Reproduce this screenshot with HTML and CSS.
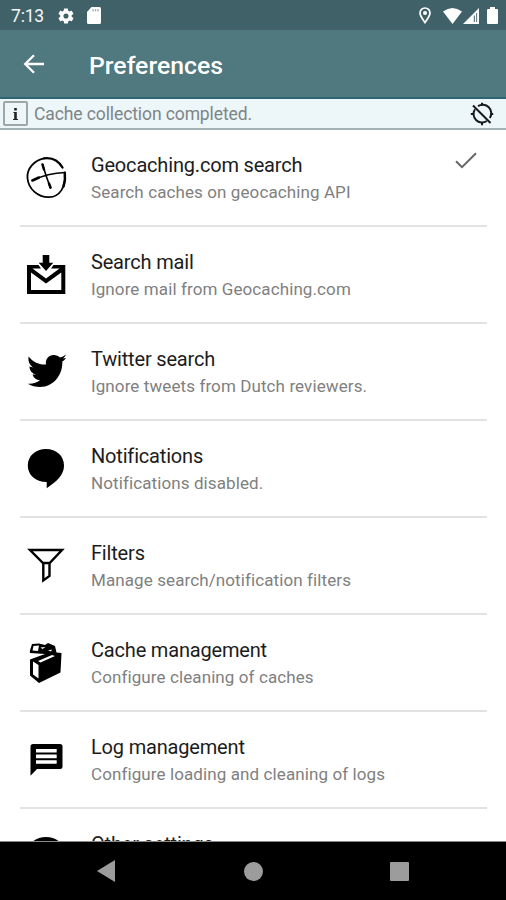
FILE: index.html
```html
<!DOCTYPE html>
<html lang="en">
<head>
<meta charset="utf-8">
<title>Preferences</title>
<link rel="stylesheet" href="styles.css">
</head>
<body>
<div class="screen">
  <header class="status">
    <span class="clock">7:13</span>
    <svg class="gear" width="16" height="16" viewBox="2 2 20 20"><path fill="#fff" d="M19.1 12.9a7 7 0 0 0 0-1.8l2-1.6c.2-.1.3-.4.1-.6l-1.9-3.3c-.1-.2-.4-.3-.6-.2l-2.4 1a7 7 0 0 0-1.6-1l-.4-2.5a.5.5 0 0 0-.5-.4h-3.800a.5.5 0 0 0-.5.4l-.4 2.500a7 7 0 0 0-1.600 1l-2.400-1c-.2-.1-.5 0-.6.2L2.700 8.900c-.1.2-.1.5.1.6l2 1.600a7 7 0 0 0 0 1.800l-2 1.600c-.2.1-.3.4-.1.6l1.900 3.300c.1.2.4.3.6.2l2.400-1a7 7 0 0 0 1.600 1l.4 2.500c0 .2.200.4.500.4h3.800c.2 0 .5-.2.500-.4l.4-2.500a7 7 0 0 0 1.600-1l2.400 1c.2.1.500 0 .6-.2l1.900-3.300c.1-.2.100-.5-.1-.6zM12 15.200a3.200 3.200 0 1 1 0-6.400 3.200 3.200 0 0 1 0 6.400z"/></svg>
    <svg class="card" width="14" height="17" viewBox="0 0 14 17"><path fill="#fff" d="M4.500 0H12.500Q14 0 14 1.500V15.500Q14 17 12.500 17H1.500Q0 17 0 15.500V5z"/><path stroke="#9fb3b6" stroke-width="1.300" d="M6 2v2.500M8.500 2v2.500M11 2v2.500"/></svg>
    <span class="spacer"></span>
    <svg class="pin" width="12" height="17" viewBox="0 0 12 17"><path fill="none" stroke="#fff" stroke-width="1.700" d="M6 15.500C4 12.500 1 9 1 6a5 5 0 0 1 10 0c0 3-3 6.500-5 9.500z"/><circle cx="6" cy="6" r="2" fill="#fff"/></svg>
    <svg class="wifi" width="19" height="16" viewBox="0 0 19 16"><path fill="#fff" d="M0 3.500Q9.500-3.500 19 3.500L9.500 16z"/></svg>
    <svg class="signal" width="16" height="16" viewBox="0 0 16 16"><path fill="#fff" d="M16 0V16H0z"/><path fill="#416168" d="M10.800 7.500h1v6.500h-1zM13.200 5h.9v9h-.9z"/></svg>
    <svg class="battery" width="11" height="17" viewBox="0 0 11 17"><path fill="#fff" d="M3 0h5v2h2q1 0 1 1v13q0 1-1 1H1q-1 0-1-1V3q0-1 1-1h2z"/></svg>
  </header>
  <div class="toolbar">
    <svg class="back" width="22" height="20" viewBox="0 0 22 20"><path fill="none" stroke="#fff" stroke-width="2.300" d="M21 10H2.500M11 1.200L2.200 10l8.800 8.800"/></svg>
    <h1>Preferences</h1>
  </div>
  <div class="notice">
    <span class="info"><svg width="5" height="12" viewBox="0 0 5 12"><path fill="#222" d="M1.200 0h2.600v2.400H1.200zM.4 4h3.400v7H5v1H0v-1h1.200V5H.4z"/></svg></span>
    <span class="notice-text">Cache collection completed.</span>
    <svg class="gps" width="24" height="24" viewBox="0 0 24 24"><g fill="none" stroke="#161b1c" stroke-width="2"><path d="M8 4.200A8.500 8.500 0 0 1 19.800 16M16.800 19A8.500 8.500 0 0 1 5 7.200"/><path d="M3 3.500L20.500 21M12 .8v3M12 20.200v3M.8 12h3M20.200 12h3"/></g></svg>
  </div>
  <main class="list">
    <section class="row">
      <svg class="icon" viewBox="0 0 50 50"><g fill="none" stroke="#000" stroke-linecap="round"><path stroke-width="1.800" d="M23 6.300C14 8 5.500 16 6.500 26.500C7.500 37 17 45.500 28 45.200C39 44.800 45 35 44 20.500"/><path stroke-width="2.300" d="M23 6.300Q35 4.500 41.500 15.500"/><path stroke-width="1.600" d="M11 28.500Q27 21 44 20.500M21.500 12.500Q25 24 29.500 36"/><path stroke-width="2.500" d="M11.500 28.500L18 25.500M21.500 12.500l1.500 5M28 31.500l1.500 4M43.800 21q.8 7-1.200 13"/></g></svg>
      <div class="copy"><h2>Geocaching.com search</h2><p>Search caches on geocaching API</p></div>
      <svg class="check" width="22" height="17" viewBox="0 0 22 17"><path fill="none" stroke="#666" stroke-width="2" d="M1 9.200l6 6L21 1.200"/></svg>
    </section>
    <section class="row">
      <svg class="icon" viewBox="0 0 50 50"><path d="M6 16H17.500L20 19.500H11.500L25 29.500L38.500 19.500H30L32.500 16H44.300V45H6zM10 23.500V41H40.300V23.500L25 34.500z" fill-rule="evenodd"/><path d="M21.700 6h6.600v7.700h4L25 22l-7.300-8.300h4z"/></svg>
      <div class="copy"><h2>Search mail</h2><p>Ignore mail from Geocaching.com</p></div>
    </section>
    <section class="row">
      <svg class="icon" viewBox="0 0 50 50"><path d="M7.600 10.500C12 16 18 19 25 18.500C24 13 28 9 32.500 9C35.500 9 37.500 10 39 11.500C41 11.200 43 10 45 8.500C44.500 10 43.500 11.200 42 12.500L45 12C44 13.500 43 14.500 41.300 15.500C42 28 33 41 19 41C14.500 41 10.500 40 7 37.700C11.500 38 15.500 37 19 34.300C15 34 12.500 31.500 11.500 28.500H15C11 27.500 8.500 24.500 8.500 20.500L12 21.500C8 18.500 7 14.500 7.600 10.500z"/></svg>
      <div class="copy"><h2>Twitter search</h2><p>Ignore tweets from Dutch reviewers.</p></div>
    </section>
    <section class="row">
      <svg class="icon" viewBox="0 0 50 50"><path d="M25 6C35.500 6 43 13 43 22.500C43 32 36 38 25.700 45.300V39C14.500 39 6.800 32 6.800 22.500C6.800 13 14.500 6 25 6z"/></svg>
      <div class="copy"><h2>Notifications</h2><p>Notifications disabled.</p></div>
    </section>
    <section class="row">
      <svg class="icon" viewBox="0 0 50 50"><path fill="none" stroke="#000" stroke-width="2.400" d="M9 10H41L28.700 23H22zM22.300 23V40.500L28.500 36V23"/></svg>
      <div class="copy"><h2>Filters</h2><p>Manage search/notification filters</p></div>
    </section>
    <section class="row">
      <svg class="icon" viewBox="0 0 50 50"><path d="M8.800 14L11 7L18 6.500L24 8L27 6L34 9L35.500 15.500L40.500 16L39.500 35.500L18 46L9 38.500V22.500L24 17L9 16z"/><path fill="#fff" d="M12.500 9l5.500-.5L17 14l-5.500-.5zM12 24.500l5.500 3.500v13.500L12 37.500zM17 24L31 18l3 1L19.500 25.500zM27 13.500l4-1-1 2zM19.500 10.500l5-.5-3 2z"/></svg>
      <div class="copy"><h2>Cache management</h2><p>Configure cleaning of caches</p></div>
    </section>
    <section class="row">
      <svg class="icon" viewBox="0 0 50 50"><path d="M12 10H39Q41.500 10 41.500 12.500V32.500Q41.500 35 39 35H16L9.500 41.700V12.500Q9.500 10 12 10z"/><path fill="#fff" d="M15 15h20.700v3.500H15zM15 20.500h20.700v3.800H15zM15 26.300h20.700v3.500H15z"/></svg>
      <div class="copy"><h2>Log management</h2><p>Configure loading and cleaning of logs</p></div>
    </section>
    <section class="row">
      <svg class="icon" viewBox="0 0 50 50"><ellipse cx="25" cy="20" rx="18" ry="14"/></svg>
      <div class="copy"><h2>Other settings</h2></div>
    </section>
  </main>
  <nav class="navbar">
    <svg width="18" height="22" viewBox="0 0 18 22"><path fill="#9c9c9c" d="M18 0V22L0 11z"/></svg>
    <span class="home"></span>
    <span class="recent"></span>
  </nav>
</div>
</body>
</html>
```

FILE: styles.css
```css
* { box-sizing: border-box; }
body { margin: 0; background: #fff; font-family: Roboto, "Liberation Sans", sans-serif; }
h1, h2, p { margin: 0; white-space: nowrap; }
svg { display: block; flex: none; }
.screen { width: 506px; height: 900px; display: flex; flex-direction: column; overflow: hidden; }
.status { height: 30px; flex: none; background: #416168; display: flex; align-items: center; padding: 1px 8px 0 11px; color: #f4f8f8; }
.clock { width: 47px; font-size: 17.500px; line-height: 28px; letter-spacing: -.2px; }
.card { margin-left: 13px; }
.spacer { flex: 1; }
.wifi { margin-left: 12px; }
.signal { margin-left: 1px; }
.battery { margin-left: 8px; }
.toolbar { height: 69px; flex: none; background: #4f787f; border-bottom: 2px solid #2f6474; display: flex; align-items: center; padding: 4px 0 0 23px; }
.back { margin-top: -3px; }
h1 { margin-left: 44px; color: #fff; font-size: 24.800px; font-weight: 500; line-height: 32px; }
.notice { height: 31px; flex: none; background: #edf6f9; border-bottom: 2px solid #a5b2b3; display: flex; align-items: center; padding: 0 12px 0 3px; }
.info { width: 25px; height: 25px; border: 2px solid #a0a6a8; border-radius: 2px; display: grid; place-items: center; }
.notice-text { flex: 1; margin-left: 6px; font-size: 17.500px; letter-spacing: -.1px; color: #7d8586; padding-top: 1px; }
.list { flex: 1; min-height: 0; overflow: hidden; border-bottom: 1px solid #888; }
.row { height: 97px; margin: 0 19px 0 20px; padding-left: 1px; border-bottom: 2px solid #e2e2e2; display: flex; align-items: flex-start; }
.icon { width: 50px; height: 50px; margin-top: 22px; }
.copy { margin: 22px 0 0 20px; flex: 1; }
h2 { font-size: 20px; font-weight: 400; line-height: 27px; color: #1c1c1c; letter-spacing: -.18px; }
p { font-size: 17px; line-height: 26px; color: #808080; letter-spacing: .1px; }
.check { margin: 22px 10px 0 0; }
.navbar { height: 58px; flex: none; background: #000; display: flex; align-items: center; padding-left: 97px; }
.home { width: 19px; height: 19px; margin-left: 129px; background: #9c9c9c; border-radius: 50%; }
.recent { width: 19px; height: 19px; margin-left: 127px; background: #9c9c9c; border-radius: 1px; }
```
